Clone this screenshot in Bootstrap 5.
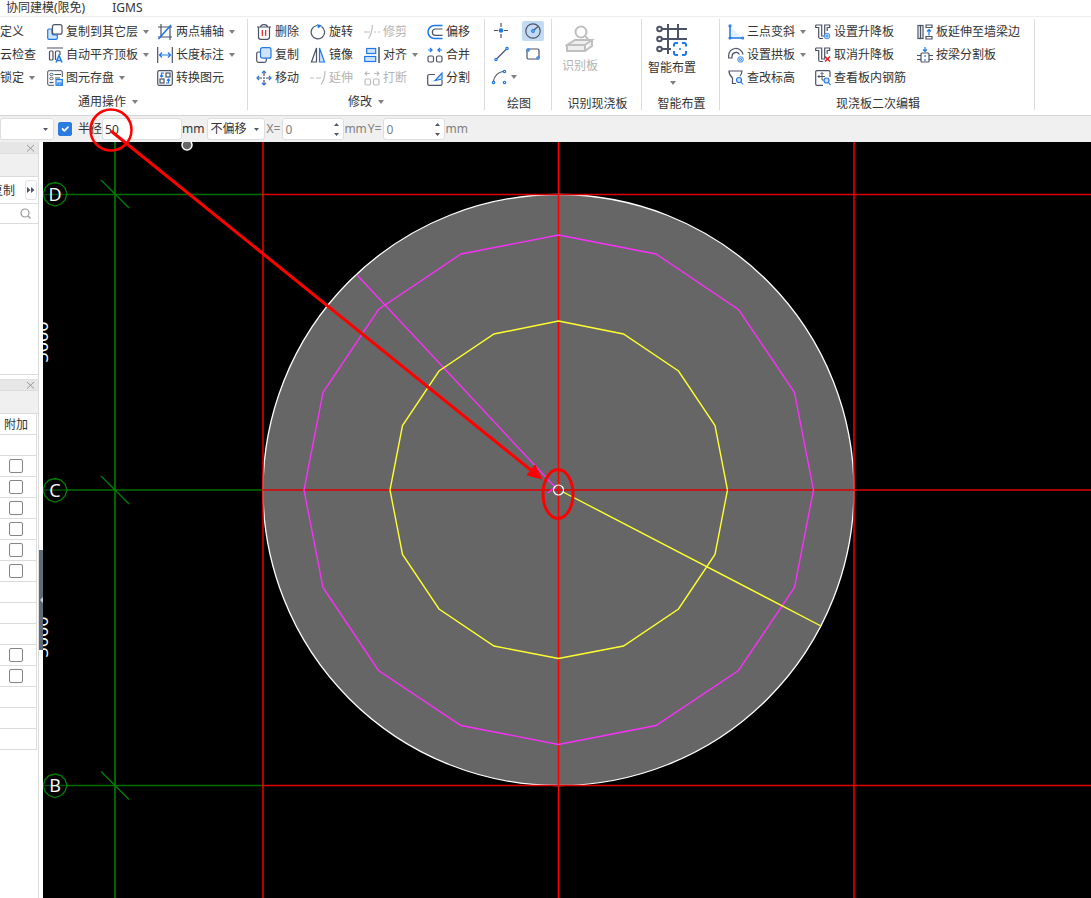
<!DOCTYPE html>
<html lang="zh-CN">
<head>
<meta charset="utf-8">
<meta name="viewport" content="width=device-width, initial-scale=1">
<title>现浇板二次编辑</title>
<link rel="stylesheet" href="https://cdn.jsdelivr.net/npm/bootstrap@5.3.0/dist/css/bootstrap.min.css">
<style>
:root{--ink:#333;--line:#dcdcdc;--dk:#4d5366;--bl:#1f78e8;--lt:#cfe3fb;--off:#b4b4b4}
body{font:12px/18px "Noto Sans","Noto Sans CJK SC",sans-serif;color:var(--ink);background:#fff}
a{color:inherit;text-decoration:none}
svg{flex:none}
.tabs{height:17px;border-bottom:1px solid #eee;gap:27px;padding-left:6px}
.tabs a{line-height:16px}
.ribbon{height:99px;padding:2px 0 5px;border-bottom:1px solid #d4d4d4;overflow:hidden}
.group{border-right:1px solid var(--line);position:relative;flex:none}
.tools{display:grid;grid-auto-rows:23px;padding-top:1px;height:70px}
.tool{border:0;background:none;padding:0;color:inherit;display:flex;align-items:center;gap:3px;white-space:nowrap;text-align:left}
.tool:disabled{color:var(--off)}
.caret{width:0;height:0;border:3px solid transparent;border-top:4px solid #808080;border-bottom:0;flex:none;margin-left:2px}
.legend{font-size:12px;font-weight:400;line-height:18px;display:flex;justify-content:center;align-items:center;height:26px;margin:0}
.legend .caret{margin-left:6px}
.legend.plain{height:30px}
.g1{width:248px}.g1 .tools{grid-template-columns:47px 110px 1fr}.g1 .legend{padding-right:31px}
.g2{width:237px}.g2 .tools{grid-template-columns:54px 54px 63px 1fr;padding-left:8px}
.g3{width:67px}.g3 .tools{grid-template-columns:32px 22px;padding-left:5px}
.g4{width:90px}.g5{width:78px}
.g6{width:315px}.g6 .tools{grid-template-columns:87px 102px 1fr;padding-left:8px}
.g3 .legend,.g4 .legend,.g5 .legend,.g6 .legend{padding-left:2px}
.g3 .tool{width:22px;height:20px;margin-top:1px;justify-content:center}
.g3 .tool.on{background:#c2dbf3;border-radius:2px}
.g3 .wide{justify-content:flex-start;padding-left:1px;width:30px;gap:0}
.big{flex-direction:column;align-items:center;gap:3px;height:70px;padding-top:5px}
.g4 .big{padding-left:10px}.g5 .big{padding-left:6px}
.big .caret{margin:1px 0 0 1px}
.i{width:16px;height:16px;fill:none;stroke:var(--dk);stroke-width:1.2}
.i .b{stroke:var(--bl)}.i .f{fill:var(--lt);stroke:var(--bl)}.i .s{fill:var(--bl);stroke:none}.i .r{stroke:#e02020}
.tool:disabled .i{stroke:#bdbdbd}
.opts{height:26px;background:#f0f0f0;flex:none;color:#333}
.opts .form-control,.opts .form-select{font-size:12px;line-height:18px;height:22px;min-height:0;border:1px solid #dedede;border-radius:3px;padding:0 2px;color:#333;flex:none;background-color:#fff}
.opts .form-select{background-image:url("data:image/svg+xml,%3Csvg xmlns='http://www.w3.org/2000/svg' width='5' height='3'%3E%3Cpath d='M0 0h5L2.5 3z' fill='%23505866'/%3E%3C/svg%3E");background-size:5px 3px;background-position:right 5px center}
.opts .num{color:#808080;width:62px;-moz-appearance:textfield;appearance:textfield;background:#fff url("data:image/svg+xml,%3Csvg xmlns='http://www.w3.org/2000/svg' width='5' height='13'%3E%3Cpath d='M0 3h5L2.5 0zM0 10h5L2.5 13z' fill='%23505866'/%3E%3C/svg%3E") no-repeat right 4px center}
.num::-webkit-inner-spin-button{-webkit-appearance:none}
.opts .muted{color:#808080}
.opts label.muted{margin:0 2px 0 1px}
.opts .form-check-input{width:14px;height:14px;margin:0 6px 0 4px;border-radius:2px;flex:none}
.opts .form-check-input:checked{background-color:#2a7ce0;border-color:#2a7ce0}
.pick{width:54px}.rad{width:80px}.shift{width:58px;margin-left:3px}
.side{width:39px;border-right:1px solid var(--line);flex:none;overflow:hidden}
.gutter{width:4px;flex:none;position:relative;background:#fff}
.grip{position:absolute;left:0;top:408px;width:4px;height:100px;background:#5f6b76;border:0;padding:0;display:flex;align-items:center}
.head{height:12px;background:#e6e6e6;border-bottom:1px solid var(--line);display:flex;justify-content:flex-end;align-items:center;padding-right:3px}
.head button{border:0;background:none;padding:0;display:flex}
.band{height:23px;background:#f0f0f0;border-bottom:1px solid var(--line)}
.copyrow{height:27px;border-bottom:1px solid var(--line);gap:10px;padding-right:1px}
.copyrow button{white-space:nowrap;border:0;background:none;padding:2px 0 0;flex:none;color:inherit}
.copyrow .more{width:12px;height:20px;padding:0;border:1px solid #e2e2e2;border-radius:3px;display:flex;align-items:center;justify-content:center}
.search{height:20px;border-bottom:1px solid var(--line);padding-right:7px}
.list{height:151px;border-bottom:1px solid var(--line);margin-bottom:4px}
.props{width:37px;border-collapse:collapse;table-layout:fixed;margin-top:-1px}
.props th,.props td{height:21px;padding:0;border:1px solid var(--line);border-left:0;font-weight:400;line-height:18px;vertical-align:middle}
.props th{padding:2px 0 0 4px;white-space:nowrap}
.props td{padding-left:9px}
.props .form-check-input{width:14px;height:14px;margin:0;display:block;border:1px solid #858585;border-radius:2px}
.stage{background:#000;min-width:0}
.stage svg{display:block;width:100%;height:100%}
.stage text{font:18px "Open Sans","Noto Sans",sans-serif;fill:#fff}
.over{position:absolute;inset:0;width:100%;height:100%;pointer-events:none}
</style>
</head>
<body class="vh-100 d-flex flex-column overflow-hidden position-relative">
<nav class="tabs d-flex flex-shrink-0"><a href="#">协同建模(限免)</a><a href="#">IGMS</a></nav>

<header class="ribbon d-flex flex-shrink-0">
<section class="group g1">
 <div class="tools">
  <button class="tool">定义</button>
  <button class="tool"><svg class="i" viewBox="0 0 16 16"><path class="f" d="M5 5H2Q.7 5 .7 6.300V14q0 1.300 1.300 1.300h7q1.300 0 1.300-1.300V11H7Q5 11 5 9z"/><rect x="5.500" y=".7" width="9.500" height="9.500" rx="2"/></svg>复制到其它层<i class="caret"></i></button>
  <button class="tool"><svg class="i" viewBox="0 0 16 16"><path d="M4 0v13M1 3h14M13 3v13M1 13h14"/><path class="b" d="M1.500 15L14 1" stroke-width="1.600"/></svg>两点辅轴<i class="caret"></i></button>
  <button class="tool">云检查</button>
  <button class="tool"><svg class="i" viewBox="0 0 16 16"><path d="M0 1h16M8.500 13V5q0-1 1-1h2.500q1 0 1 1v3"/><rect x="2.500" y="4" width="3.500" height="9" rx="1"/><path class="b" d="M9 15.500l3-7 3 7M10 13.500h4" stroke-width="1.500"/></svg>自动平齐顶板<i class="caret"></i></button>
  <button class="tool"><svg class="i" viewBox="0 0 16 16"><path d="M.7 0v16M15.300 0v16"/><path class="b" d="M2 8h12M5 5.500L2.500 8 5 10.500M11 5.500L13.500 8 11 10.500"/></svg>长度标注<i class="caret"></i></button>
  <button class="tool">锁定<i class="caret"></i></button>
  <button class="tool"><svg class="i" viewBox="0 0 16 16"><path d="M15.300 7V2q0-1.300-1.300-1.300H2Q.7.700.7 2v12q0 1.300 1.300 1.300h5M7.500 4.500H14M8 8h5" stroke-width="1"/><g stroke-width=".9"><ellipse cx="4.500" cy="4.500" rx="1.700" ry="1.200"/><ellipse cx="4.500" cy="8.500" rx="1.700" ry="1.200"/></g><path d="M2.500 12.500h4"/><rect class="f" x="9" y="9.500" width="6.300" height="5.800"/><path class="b" d="M11 15v-2h3v2"/></svg>图元存盘<i class="caret"></i></button>
  <button class="tool"><svg class="i" viewBox="0 0 16 16"><rect x=".7" y=".7" width="14.600" height="14.600" rx="1.500"/><rect x="9" y="3" width="4" height="4"/><rect x="3" y="9" width="4" height="4"/><path class="b" d="M7 3H4.500v4M3 5.500l1.500 1.500L6 5.500M9 13h2.500V9M10 10.500L11.500 9l1.500 1.500"/></svg>转换图元</button>
 </div>
 <h2 class="legend">通用操作<i class="caret"></i></h2>
</section>

<section class="group g2">
 <div class="tools">
  <button class="tool"><svg class="i" viewBox="0 0 16 16"><path d="M1 3h14M4.500 3q0-2.300 3.500-2.300T11.500 3M2.500 3v10q0 2.300 2.300 2.300h6.400q2.300 0 2.300-2.300V3"/><path class="r" d="M6.300 6v6M9.700 6v6"/></svg>删除</button>
  <button class="tool"><svg class="i" viewBox="0 0 16 16"><path d="M11.500 2.500A6.700 6.700 0 1 1 7 1.500"/><path class="s" d="M7 0l5 1.500L8 4.500z"/></svg>旋转</button>
  <button class="tool" disabled><svg class="i" viewBox="0 0 16 16"><path d="M0 8h6M4.500 14.500Q8 10 8.500 1M10 8h2M14 8h2"/></svg>修剪</button>
  <button class="tool"><svg class="i" viewBox="0 0 16 16"><path class="b" d="M15.500 1.500H7.500a6.500 6.500 0 0 0 0 13h8" stroke-width="1.500"/><path d="M15.500 5H8a3.200 3.200 0 0 0 0 6.300h7.500"/></svg>偏移</button>
  <button class="tool"><svg class="i" viewBox="0 0 16 16"><path d="M4 5H2.500Q.7 5 .7 6.800v6.700q0 1.800 1.800 1.800h6q1.800 0 1.800-1.800V11"/><rect class="f" x="4.500" y=".7" width="10.500" height="10.500" rx="2"/></svg>复制</button>
  <button class="tool"><svg class="i" viewBox="0 0 16 16"><path d="M6.500 1v14H1.500z"/><path class="f" d="M9.500 1v14h5z"/></svg>镜像</button>
  <button class="tool"><svg class="i" viewBox="0 0 16 16"><rect class="f" x="2.700" y="1.500" width="9" height="5"/><rect class="f" x=".7" y="9.500" width="11" height="5"/><path d="M15 0v16" stroke-width="1.500"/></svg>对齐<i class="caret"></i></button>
  <button class="tool"><svg class="i" viewBox="0 0 16 16"><rect x="1" y="9" width="5.500" height="6" rx="1.500"/><rect x="9.500" y="9" width="5.500" height="6" rx="1.500"/><path class="b" d="M1 3h3.500M3 1l2 2-2 2M15 3h-3.500M13 1l-2 2 2 2"/></svg>合并</button>
  <button class="tool"><svg class="i" viewBox="0 0 16 16"><path class="b" d="M6 3l2-2 2 2M6 13l2 2 2-2M3 6L1 8l2 2M13 6l2 2-2 2"/><path d="M8 2v4M8 10v4M2 8h4M10 8h4M8 7v2"/></svg>移动</button>
  <button class="tool" disabled><svg class="i" viewBox="0 0 16 16"><path d="M0 8h4M6 8h5M11 14.500Q15 9 15 1"/></svg>延伸</button>
  <button class="tool" disabled><svg class="i" viewBox="0 0 16 16"><rect x="1" y="9" width="5.500" height="6" rx="1.500"/><rect x="9.500" y="9" width="5.500" height="6" rx="1.500"/><path d="M1 3.500h5M3 1.500l-2 2 2 2M15 3.500h-5M13 1.500l2 2-2 2"/></svg>打断</button>
  <button class="tool"><svg class="i" viewBox="0 0 16 16"><path d="M8 4.500H2.500Q.7 4.500.7 6v8q0 1.300 1.800 1.300h11q1.500 0 1.500-1.300v-4"/><path class="f" d="M15 3v6l-7 1.500z"/></svg>分割</button>
 </div>
 <h2 class="legend">修改<i class="caret"></i></h2>
</section>

<section class="group g3">
 <div class="tools">
  <button class="tool" aria-label="点"><svg class="i" viewBox="0 0 16 16"><path d="M8 0v4M8 11v4M1 7.500h4M11 7.500h4"/><circle class="s" cx="8" cy="7.500" r="2.300"/></svg></button>
  <button class="tool on" aria-label="圆"><svg class="i" viewBox="0 0 16 16"><circle cx="8" cy="8" r="7.200"/><path d="M9 7l4-3.500"/><circle class="b" cx="8" cy="8" r="1.300"/></svg></button>
  <button class="tool" aria-label="直线"><svg class="i" viewBox="0 0 16 16"><path d="M4 12.500l9-9"/><circle class="b" cx="3" cy="13.500" r="1.200"/><circle class="b" cx="14" cy="2.500" r="1.200"/></svg></button>
  <button class="tool" aria-label="矩形"><svg class="i" viewBox="0 0 16 16"><rect x="2" y="3" width="12" height="10" rx="1.500"/><circle class="b" cx="3" cy="4" r="1.200" fill="#fff"/><circle class="b" cx="13" cy="12" r="1.200" fill="#fff"/></svg></button>
  <button class="tool wide" aria-label="弧线"><svg class="i" viewBox="0 0 16 16"><path d="M2.500 12Q4 4 12 2.500"/><circle class="b" cx="2.500" cy="13.500" r="1.200"/><circle class="b" cx="13.500" cy="2.500" r="1.200"/><circle class="b" cx="13.500" cy="13.500" r="1.200"/></svg><i class="caret ms-1"></i></button>
 </div>
 <h2 class="legend plain">绘图</h2>
</section>

<section class="group g4">
 <button class="tool big" disabled><svg width="30" height="30" viewBox="0 0 30 30" fill="none" stroke="#bfbfbf" stroke-width="2"><circle cx="16" cy="8" r="5.500"/><path d="M20 12l3 3"/><path d="M2 21l8-5h17l-7 5zM2 21v6h18v-6M20 27l7-5v-6" fill="#eee"/></svg>识别板</button>
 <h2 class="legend plain">识别现浇板</h2>
</section>

<section class="group g5">
 <button class="tool big"><svg width="32" height="32" viewBox="0 0 32 32" fill="none" stroke="#4d5366" stroke-width="2"><path d="M6 5h25M12 0v30M22 0v15M6 15h25M6 25h9"/><circle cx="3.500" cy="5" r="2.300"/><circle cx="3.500" cy="15" r="2.300"/><circle cx="3.500" cy="25" r="2.300"/><rect x="16" y="17" width="15" height="15" fill="#fff" stroke="none"/><path stroke="#1f78e8" d="M18 22.500v-1.500q0-2 2-2h2M26 19h2q2 0 2 2v1.500M30 27v2q0 2-2 2h-2M22 31h-2q-2 0-2-2v-2"/><circle cx="24" cy="25" r="1" fill="#1f78e8" stroke="none"/></svg>智能布置<i class="caret"></i></button>
 <h2 class="legend plain">智能布置</h2>
</section>

<section class="group g6">
 <div class="tools">
  <button class="tool"><svg class="i" viewBox="0 0 16 16"><path fill="#e5f0fd" stroke="none" d="M2 2l12 12H2z"/><path class="b" d="M2 2v12h12" stroke-width="1.500"/><circle class="b" cx="2" cy="1.800" r="1"/><circle class="b" cx="2" cy="14" r="1"/><circle class="b" cx="14.500" cy="14" r="1"/></svg>三点变斜<i class="caret"></i></button>
  <button class="tool"><svg class="i" viewBox="0 0 16 16"><path d="M.7 1h6v11h3V1h5v2.500h-2.500V7M.7 1v2.500h3V13q0 1.500 1.500 1.500H8"/><circle class="f" cx="12" cy="12" r="2.800" stroke-width=".8"/><circle class="b" cx="12" cy="12" r="1" stroke-width=".8"/></svg>设置升降板</button>
  <button class="tool"><svg class="i" viewBox="0 0 16 16"><rect x="1" y="1.500" width="2.500" height="13"/><rect x="3.500" y="1.500" width="2.500" height="13"/><path d="M9 1h6v2.500H9zM9 12.500h6V15H9z"/><path class="b" d="M12 11.500v-6M10 7.500l2-2 2 2"/></svg>板延伸至墙梁边</button>
  <button class="tool"><svg class="i" viewBox="0 0 16 16"><path d="M.7 9a7.200 7.200 0 0 1 14.300-1.500M4 9.500a4 4 0 0 1 7.500-2M.7 9v2H4V9.500"/><circle class="f" cx="12.500" cy="12.500" r="2.800" stroke-width=".8"/><circle class="b" cx="12.500" cy="12.500" r="1" stroke-width=".8"/></svg>设置拱板<i class="caret"></i></button>
  <button class="tool"><svg class="i" viewBox="0 0 16 16"><path d="M.7 1h6v11h3V1h5v2.500h-2.500V7M.7 1v2.500h3V13q0 1.500 1.500 1.500H8"/><path class="r" d="M10 9.500l5 5M15 9.500l-5 5" stroke-width="1.500"/></svg>取消升降板</button>
  <button class="tool"><svg class="i" viewBox="0 0 16 16"><path d="M0 8.500h4M0 12.500h4M12 8.500h4M12 12.500h4"/><rect x="4" y="6" width="8" height="9" rx="1"/><path class="b" d="M8 0v4M6 2.500l2 2 2-2M8 8v2M8 12v2"/></svg>按梁分割板</button>
  <button class="tool"><svg class="i" viewBox="0 0 16 16"><path d="M8 13.500H4.500V8Q1 5 1 1h13q-.5 4-2 5"/><circle class="f" cx="11" cy="10" r="2.500"/><path class="b" d="M13 12l2 2.500"/></svg>查改标高</button>
  <button class="tool"><svg class="i" viewBox="0 0 16 16"><path d="M15 7V2q0-1.300-1.300-1.300H2Q.7.700.7 2v12q0 1.300 1.300 1.300h6"/><path d="M7 3v7M3 6.500h7M4.500 5L3 6.500 4.500 8M5.500 4L7 2.500 8.500 4M7 10h1.500" stroke-width="1"/><circle class="f" cx="11.500" cy="10.500" r="2.500"/><path class="b" d="M13.500 12.500l2 2.500"/></svg>查看板内钢筋</button>
 </div>
 <h2 class="legend plain">现浇板二次编辑</h2>
</section>
</header>

<form class="opts d-flex align-items-center">
 <select class="form-select pick" aria-label="绘制方式"><option></option></select>
 <input class="form-check-input" type="checkbox" id="useR" checked>
 <label for="useR">半径</label>
 <input class="form-control rad" aria-label="半径值" value="50"><span>mm</span>
 <select class="form-select shift" aria-label="偏移方式"><option>不偏移</option></select>
 <label class="muted" for="dx">X=</label><input class="form-control num" type="number" id="dx" value="0">
 <span class="muted">mm</span><label class="muted" for="dy">Y=</label><input class="form-control num" type="number" id="dy" value="0">
 <span class="muted">mm</span>
</form>

<main class="d-flex flex-grow-1 overflow-hidden">
<aside class="side">
 <div class="head"><button aria-label="关闭"><svg width="9" height="8" viewBox="0 0 9 8" stroke="#999"><path d="M1 1l7 6.500M8 1L1 7.500"/></svg></button></div>
 <div class="band"></div>
 <div class="copyrow d-flex align-items-center justify-content-end"><button>复制</button><button class="more" aria-label="更多"><svg width="8" height="6" viewBox="0 0 8 6" fill="#505866"><path d="M0 0l3.500 3L0 6zM4 0l3.500 3L4 6z"/></svg></button></div>
 <div class="search d-flex align-items-center justify-content-end"><svg width="11" height="11" viewBox="0 0 11 11" fill="none" stroke="#999" stroke-width="1.200"><circle cx="5" cy="5" r="4"/><path d="M8 8l2.500 2.500"/></svg></div>
 <div class="list"></div>
 <div class="head border-top"><button aria-label="关闭"><svg width="9" height="8" viewBox="0 0 9 8" stroke="#999"><path d="M1 1l7 6.500M8 1L1 7.500"/></svg></button></div>
 <div class="band"></div>
 <table class="props">
  <tr><th>附加</th></tr>
  <tr><td></td></tr>
  <tr><td><input class="form-check-input" type="checkbox" aria-label="附加 1"></td></tr>
  <tr><td><input class="form-check-input" type="checkbox" aria-label="附加 2"></td></tr>
  <tr><td><input class="form-check-input" type="checkbox" aria-label="附加 3"></td></tr>
  <tr><td><input class="form-check-input" type="checkbox" aria-label="附加 4"></td></tr>
  <tr><td><input class="form-check-input" type="checkbox" aria-label="附加 5"></td></tr>
  <tr><td><input class="form-check-input" type="checkbox" aria-label="附加 6"></td></tr>
  <tr><td></td></tr><tr><td></td></tr><tr><td></td></tr>
  <tr><td><input class="form-check-input" type="checkbox" aria-label="附加 7"></td></tr>
  <tr><td><input class="form-check-input" type="checkbox" aria-label="附加 8"></td></tr>
  <tr><td></td></tr><tr><td></td></tr><tr><td></td></tr>
 </table>
</aside>
<div class="gutter"><button class="grip" aria-label="折叠"><svg width="4" height="6" viewBox="0 0 4 6"><path d="M4 0v6L1 3z" fill="#c5cbd0"/></svg></button></div>
<section class="stage flex-grow-1">
<svg>
 <g transform="translate(-43 -142)" fill="none">
  <circle cx="558.500" cy="490" r="295.500" fill="#666" stroke="#fff" stroke-width="1.300"/>
  <!-- axis grid -->
  <g stroke="#008000" stroke-width="1.300">
   <path d="M115 142V2000" stroke="#006400" stroke-width="2"/>
   <path d="M67 194.500H263M67 490H263M67 785.500H263" stroke="#006e00" stroke-width="1.500"/>
   <path d="M43 194.500h24M43 490h24M43 785.500h24" stroke="#005000"/>
   <path d="M101 180l28 28M101 476l28 28M101 771.500l28 28"/>
   <path id="bub" d="M55 182.500l6 1.500 4 4 2 6-2 6-4 4-6 2-6-2-4-4-2-6 2-6 4-4z"/>
   <use href="#bub" y="296"/><use href="#bub" y="591.500"/>
  </g>
  <path d="M263 194.500H6000M263 490H6000M263 785.500H6000" stroke="#e00000" stroke-width="1.300"/>
  <path d="M263 142V2000M854 142V2000" stroke="#f00" stroke-width="1.400"/>
  <path d="M558.500 142V2000" stroke="#f00" stroke-width="1.600"/>
  <!-- rebar ranges -->
  <path stroke="#f830f8" stroke-width="1.400" d="M558.500 235L656 254 738.500 309.500 794.500 392.500 813.500 490 794.500 587.500 738.500 670.500 656 725.500 558.500 744.500 461 725.500 378.500 670.500 323 587.500 304 490 323 392.500 378.500 309.500 461 254zM357 275L555 487l-7 6"/>
  <path stroke="#ffff30" stroke-width="1.400" d="M558.500 321L623.500 334 678.500 371 715 425.500 727.500 490 715 554.500 678.500 609 623.500 646 558.500 658.500 494 646 439 609 402.500 554.500 390 490 402.500 425.500 439 371 494 334zM563 492L821 626"/>
  <circle cx="558.500" cy="490" r="5" stroke="#fff" stroke-width="1.200"/>
  <circle cx="187" cy="145" r="5" fill="#666" stroke="#fff" stroke-width="1.500"/>
  <g stroke="none" text-anchor="middle"><text x="55" y="201">D</text><text x="55" y="497">C</text><text x="55" y="792">B</text>
  <text transform="translate(48 342) rotate(-90)">3000</text><text transform="translate(48 637) rotate(-90)">3000</text></g>
 </g>
</svg>
</section>
</main>

<!-- callout from the radius field to the opening -->
<svg class="over" fill="none" stroke="#f00" stroke-width="3"><circle cx="111" cy="130" r="20.500" stroke-width="2.500"/><path d="M111 131L532 471"/><path d="M542 479l-15-4 8-10z" fill="#f00" stroke-width="1"/><ellipse cx="558" cy="494" rx="15" ry="24.500"/></svg>
<script src="https://cdn.jsdelivr.net/npm/bootstrap@5.3.0/dist/js/bootstrap.bundle.min.js"></script>
</body>
</html>
